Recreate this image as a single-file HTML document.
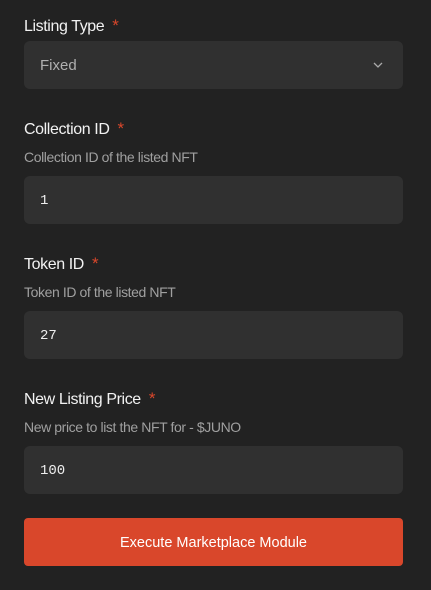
<!DOCTYPE html>
<html><head><style>
body{margin:0;width:431px;height:590px;background:#222222;font-family:"Liberation Sans",sans-serif;position:relative;overflow:hidden}
.a{position:absolute;left:24px}
.l{font-size:16px;color:#f2f2f2;letter-spacing:-0.4px}
.l span{color:#d9472b;margin-left:8px;font-size:17px}
.h{font-size:14px;color:#a0a0a0;letter-spacing:-0.4px}
.i{width:379px;height:48px;background:#303030;border-radius:6px;box-sizing:border-box;padding-left:16px;line-height:50px;font-size:14px;color:#eee;font-family:"Liberation Mono",monospace}
.b{width:379px;height:48px;background:#d9472b;border-radius:4px;text-align:center;line-height:50px;font-size:14.5px;color:#fff}
</style></head><body>
<div class="a l" style="top:16px">Listing Type<span>*</span></div>
<div class="a i" style="top:41px;color:#b0b0b0;font-family:'Liberation Sans',sans-serif;font-size:15px">Fixed
<svg style="position:absolute;right:20px;top:21px" width="10" height="6" viewBox="0 0 10 6"><path d="M1 1l4 4 4-4" stroke="#aaa" stroke-width="1.3" fill="none"/></svg></div>
<div class="a l" style="top:119px">Collection ID<span>*</span></div>
<div class="a h" style="top:149px">Collection ID of the listed NFT</div>
<div class="a i" style="top:176px">1</div>
<div class="a l" style="top:254px">Token ID<span>*</span></div>
<div class="a h" style="top:284px">Token ID of the listed NFT</div>
<div class="a i" style="top:311px">27</div>
<div class="a l" style="top:389px">New Listing Price<span>*</span></div>
<div class="a h" style="top:419px">New price to list the NFT for - $JUNO</div>
<div class="a i" style="top:446px">100</div>
<div class="a b" style="top:518px">Execute Marketplace Module</div>
</body></html>
